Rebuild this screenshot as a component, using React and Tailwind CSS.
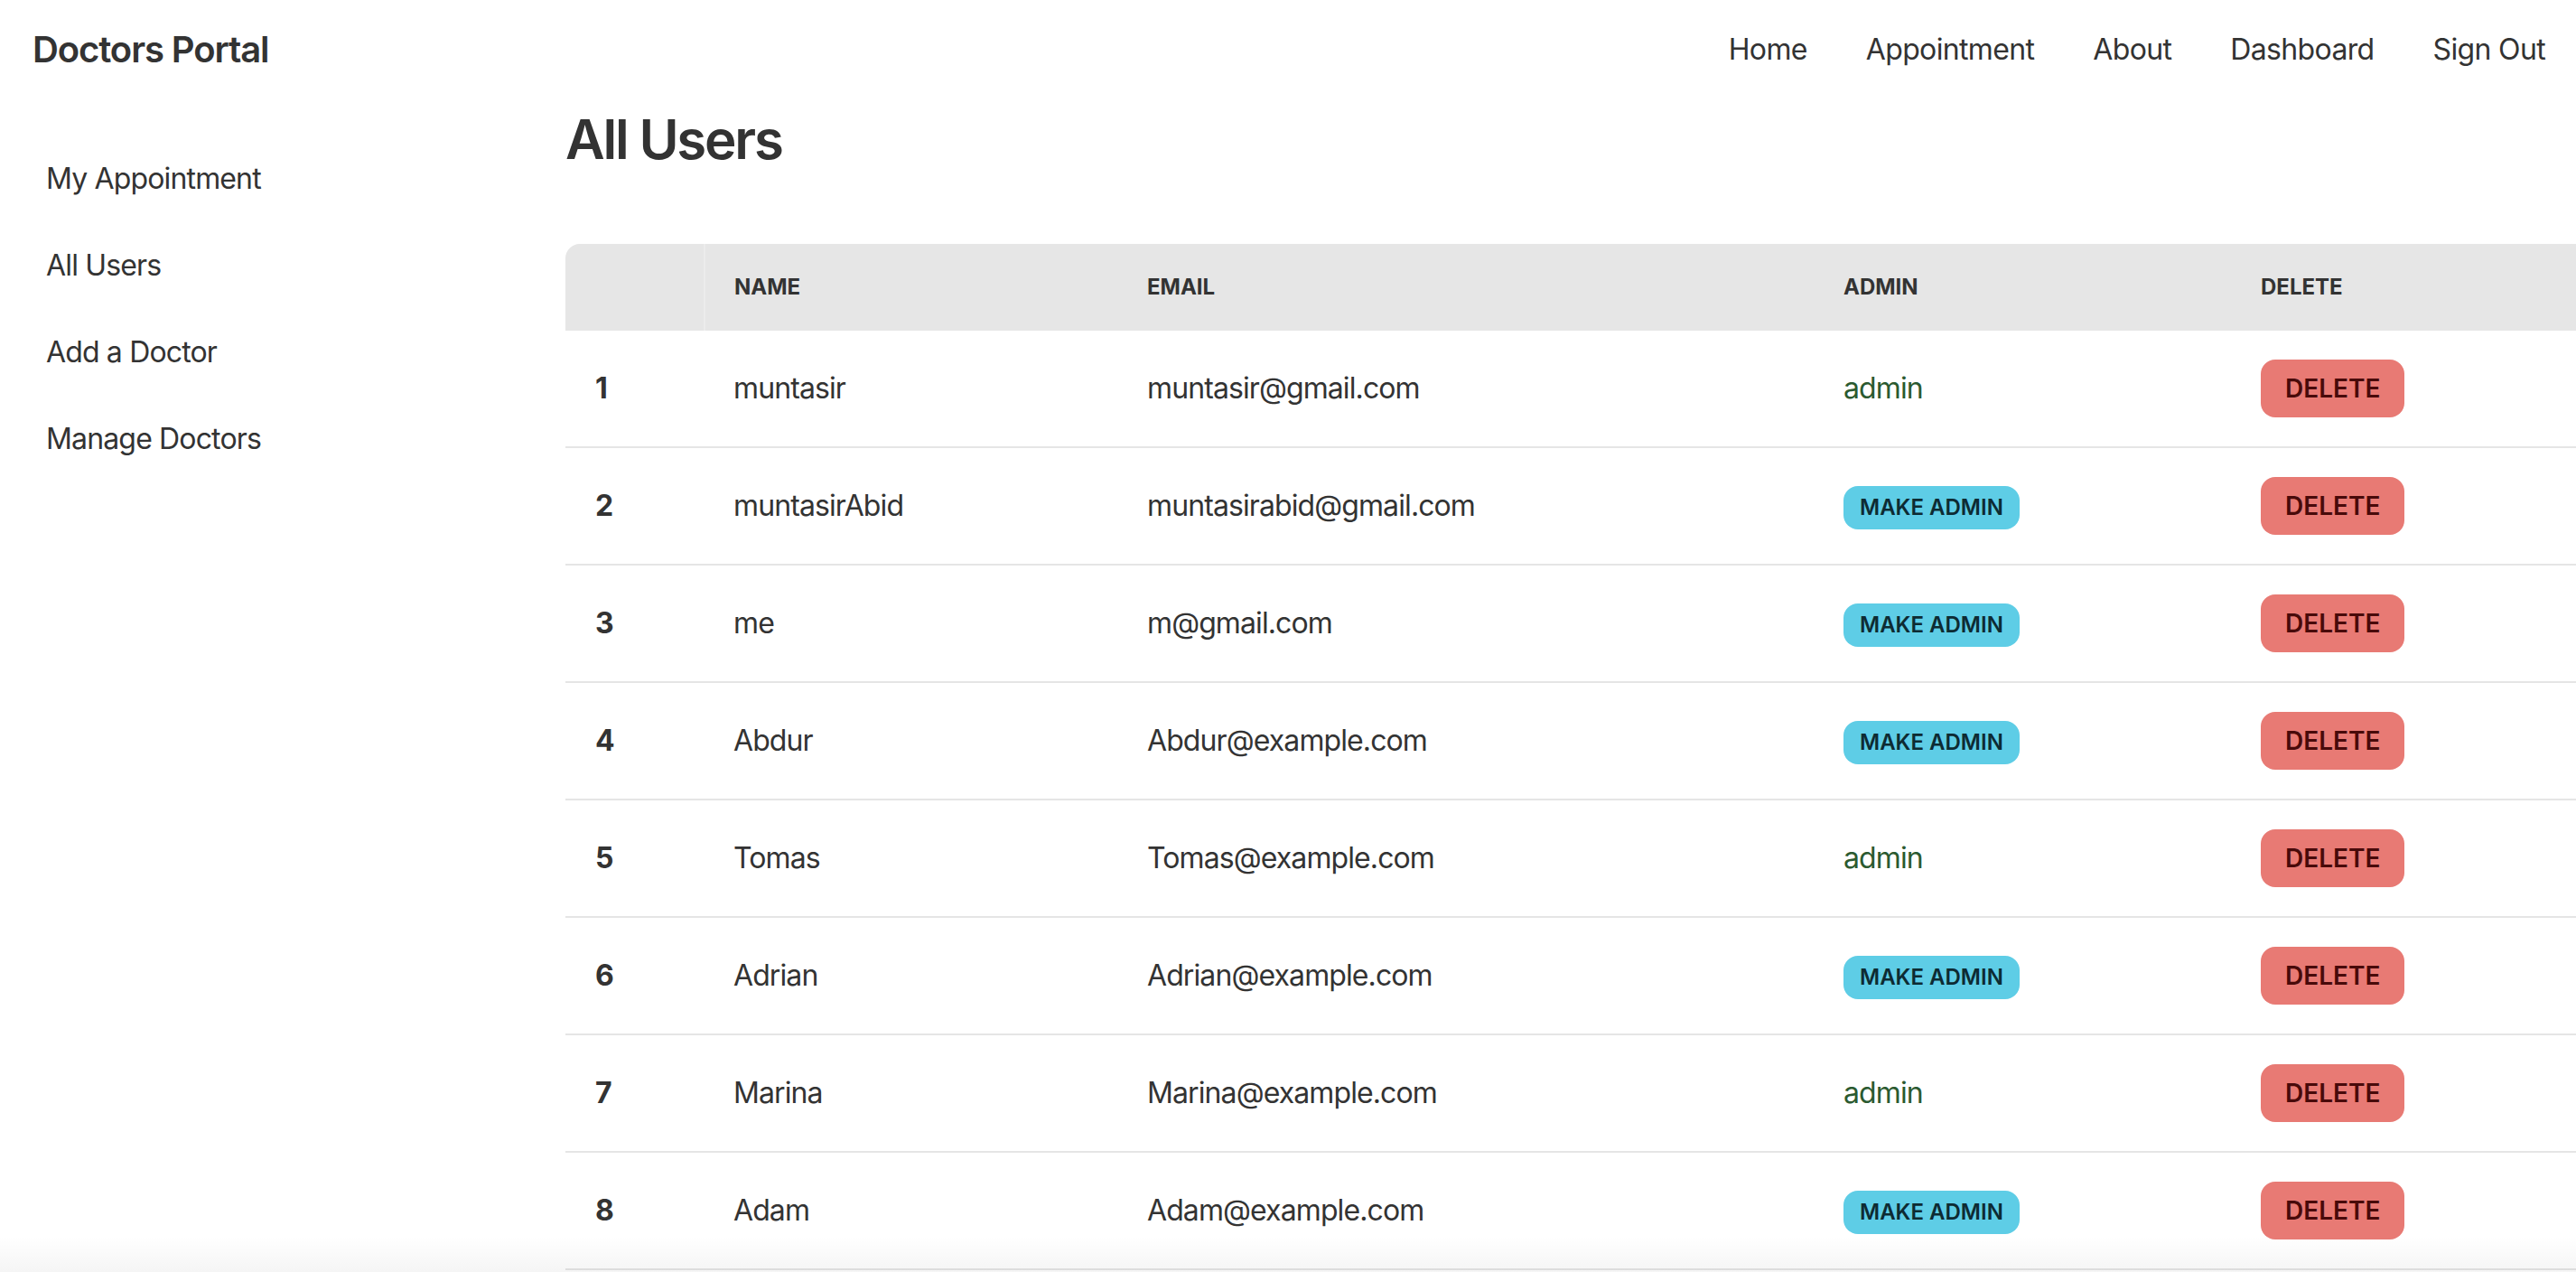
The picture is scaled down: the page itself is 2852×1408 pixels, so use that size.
import React from "react";

const users = [
  { name: "muntasir", email: "muntasir@gmail.com", admin: true },
  { name: "muntasirAbid", email: "muntasirabid@gmail.com", admin: false },
  { name: "me", email: "m@gmail.com", admin: false },
  { name: "Abdur", email: "Abdur@example.com", admin: false },
  { name: "Tomas", email: "Tomas@example.com", admin: true },
  { name: "Adrian", email: "Adrian@example.com", admin: false },
  { name: "Marina", email: "Marina@example.com", admin: true },
  { name: "Adam", email: "Adam@example.com", admin: false },
];

const navItems = ["Home", "Appointment", "About", "Dashboard", "Sign Out"];
const sideItems = ["My Appointment", "All Users", "Add a Doctor", "Manage Doctors"];

export default function App() {
  return (
    <div
      className="relative h-[1408px] w-[2852px] overflow-hidden bg-white text-[#333333]"
      style={{ fontFamily: "Inter, 'Noto Sans', 'Liberation Sans', sans-serif" }}
    >
      {/* Navbar */}
      <header className="flex h-[110px] items-center justify-between pl-[36px] pr-[34px]">
        <div className="text-[40px] font-semibold leading-[56px] tracking-[-1.1px]">Doctors Portal</div>
        <nav className="flex items-center gap-[65px] text-[32px] leading-[48px] tracking-[-0.65px]">
          {navItems.map((n) => (
            <span key={n}>{n}</span>
          ))}
        </nav>
      </header>

      <div className="flex">
        {/* Sidebar */}
        <aside className="w-[626px] shrink-0 pt-[40px] pl-[51px]">
          {sideItems.map((s) => (
            <div key={s} className="flex h-[96px] items-center text-[32px] leading-[48px] tracking-[-0.85px]">
              {s}
            </div>
          ))}
        </aside>

        {/* Main */}
        <main className="min-w-0 flex-1 pt-[8px]">
          <h1 className="text-[60px] font-semibold leading-[72px] tracking-[-2.2px]">All Users</h1>
          <div className="mt-[80px] overflow-hidden rounded-tl-[16px]">
            <table className="w-[2400px] table-fixed border-collapse text-left">
              <colgroup>
                <col className="w-[154px]" />
                <col className="w-[458px]" />
                <col className="w-[771px]" />
                <col className="w-[462px]" />
                <col />
              </colgroup>
              <thead>
                <tr className="bg-[#e6e6e6] text-[24px] font-bold uppercase leading-[32px] text-[#333333]">
                  <th className="border-r-2 border-[#ececec] px-[32px] py-[32px]"></th>
                  <th className="px-[32px] py-[32px]">Name</th>
                  <th className="px-[32px] py-[32px]">Email</th>
                  <th className="px-[32px] py-[32px]">Admin</th>
                  <th className="px-[32px] py-[32px]">Delete</th>
                </tr>
              </thead>
              <tbody className="text-[32px] leading-[48px] tracking-[-0.9px]">
                {users.map((u, i) => (
                  <tr key={u.email} className="border-b-2 border-[#e5e5e5]">
                    <th className="px-[33px] py-[32px] font-bold">{i + 1}</th>
                    <td className="px-[32px] py-[32px]">{u.name}</td>
                    <td className="px-[32px] py-[32px]">{u.email}</td>
                    <td className="px-[32px] py-[32px]">
                      {u.admin ? (
                        <span className="text-[#2b5a30]">admin</span>
                      ) : (
                        <button className="inline-flex h-[48px] items-center rounded-[16px] bg-[#5ecde6] px-[18px] text-[24px] font-semibold uppercase leading-none tracking-normal text-[#0d2b33]">
                          Make Admin
                        </button>
                      )}
                    </td>
                    <td className="px-[32px] py-[32px]">
                      <button className="inline-flex h-[64px] items-center rounded-[16px] bg-[#e87a74] px-[27px] text-[28px] font-semibold uppercase leading-none tracking-normal text-[#480a0a]">
                        Delete
                      </button>
                    </td>
                  </tr>
                ))}
              </tbody>
            </table>
          </div>
        </main>
      </div>

      {/* bottom window shadow */}
      <div className="pointer-events-none absolute inset-x-0 bottom-0 h-[40px] bg-gradient-to-b from-transparent to-black/[0.04]" />
    </div>
  );
}
